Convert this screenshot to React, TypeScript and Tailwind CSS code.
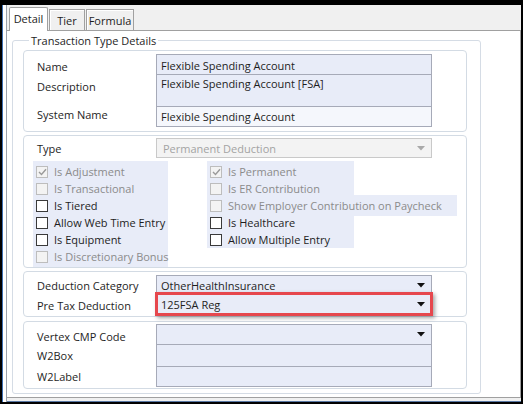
import type { ReactNode } from "react"

const font = "font-['Open_Sans','Noto_Sans',sans-serif]"

function Arrow({ disabled }: { disabled?: boolean }) {
  return (
    <svg width="8" height="5" viewBox="0 0 8 5" className="shrink-0">
      <path d="M0 0h8L4 4.5z" fill={disabled ? "#a9a9a9" : "#111111"} />
    </svg>
  )
}

function Box({ checked, disabled }: { checked?: boolean; disabled?: boolean }) {
  return (
    <span
      className={`flex h-[12px] w-[12px] shrink-0 items-center justify-center border ${
        disabled ? "border-[#bdbdbd] bg-[#f3f3f3]" : "border-[#3a3a3a] bg-white"
      }`}
    >
      {checked && (
        <svg width="9" height="8" viewBox="0 0 9 8">
          <path d="M1 4l2.5 2.5L8 1.2" fill="none" stroke="#9a9a9a" strokeWidth="1.4" />
        </svg>
      )}
    </span>
  )
}

function Check({ label, checked, disabled }: { label: string; checked?: boolean; disabled?: boolean }) {
  return (
    <div className="flex h-[17px] items-center pl-[3px]">
      <Box checked={checked} disabled={disabled} />
      <span className={`ml-[6px] whitespace-nowrap ${disabled ? "text-[#8b8b8b]" : "text-[#1e1e1e]"}`}>{label}</span>
    </div>
  )
}

function Row({ label, labelPad, children }: { label: string; labelPad: string; children: ReactNode }) {
  return (
    <div className="flex items-start">
      <div className={`w-[119px] shrink-0 ${labelPad}`}>{label}</div>
      {children}
    </div>
  )
}

function Section({ children, className = "" }: { children: ReactNode; className?: string }) {
  return <div className={`w-[444px] rounded-[4px] border border-[#d3dbe4] bg-white ${className}`}>{children}</div>
}

const field = "w-[276px] border-x border-t border-[#a6aab8] bg-[#e8ecf8] pl-[4px]"

export default function App() {
  return (
    <div className={`h-[404px] w-[523px] overflow-hidden bg-black px-[2px] pt-[5px] text-[11px] leading-[15px] text-[#1e1e1e] ${font}`}>
      <div className="flex h-[397px] border-l border-[#3d6fb3] bg-white pl-[3px]">
        <div className="flex flex-1 flex-col border-l border-[#9ba1ab] bg-[#f0f0f0]">
          {/* tabs */}
          <div className="flex h-[25px] shrink-0 items-end pl-[2px]">
            <div className="relative z-10 -mb-px flex h-[24px] w-[39px] items-center justify-center rounded-t-[2px] border border-b-0 border-[#a0a0a0] bg-white pb-[2px]">
              Detail
            </div>
            <div className="ml-px flex h-[21px] w-[36px] items-center justify-center border border-b-0 border-[#a0a0a0] bg-[#f0f0f0] shadow-[inset_1px_1px_0_#ffffff]">
              Tier
            </div>
            <div className="ml-px flex h-[21px] w-[48px] items-center justify-center border border-b-0 border-[#a0a0a0] bg-[#f0f0f0] shadow-[inset_1px_1px_0_#ffffff]">
              Formula
            </div>
          </div>

          {/* panel */}
          <div className="flex-1 border border-l-0 border-[#a0a0a0] bg-white pt-[2px] pl-[5px]">
            <fieldset className="w-[469px] rounded-[3px] border border-[#d5dce5] pt-[2px] pr-[13px] pb-[4px] pl-[10px]">
              <legend className="ml-[6px] px-[2px]">Transaction Type Details</legend>
              <div className="flex flex-col gap-[3px]">
                <Section className="pt-[3px] pb-[4px] pl-[13px]">
                  <Row label="Name" labelPad="pt-[5px]">
                    <div className={`${field} h-[20px] pt-[3px]`}>Flexible Spending Account</div>
                  </Row>
                  <Row label="Description" labelPad="pt-[5px]">
                    <div className={`${field} h-[32px] pt-[1px]`}>Flexible Spending Account [FSA]</div>
                  </Row>
                  <Row label="System Name" labelPad="pt-[1px]">
                    <div className={`${field} h-[21px] border-b bg-[#f5f7fc] pt-[2px]`}>Flexible Spending Account</div>
                  </Row>
                </Section>

                <Section className="pt-[2px]">
                  <div className="pl-[13px]">
                    <Row label="Type" labelPad="pt-[3px]">
                      <div className="flex h-[20px] w-[276px] items-center justify-between border border-[#c9c9c9] bg-[#f3f3f3] pr-[6px] pl-[6px] text-[#a3a3a3]">
                        <span>Permanent Deduction</span>
                        <Arrow disabled />
                      </div>
                    </Row>
                  </div>
                  <div className="mt-[3px] flex pl-[9px]">
                    <div className="w-[135px] bg-[#e8ecf8] py-[2px]">
                      <Check label="Is Adjustment" checked disabled />
                      <Check label="Is Transactional" disabled />
                      <Check label="Is Tiered" />
                      <Check label="Allow Web Time Entry" />
                      <Check label="Is Equipment" />
                      <Check label="Is Discretionary Bonus" disabled />
                    </div>
                    <div className="ml-[39px] self-start w-[147px] bg-[#e8ecf8] pt-[2px]">
                      <Check label="Is Permanent" checked disabled />
                      <Check label="Is ER Contribution" disabled />
                      <div className="-my-[2px] w-[250px] bg-[#e8ecf8] py-[2px]">
                        <Check label="Show Employer Contribution on Paycheck" disabled />
                      </div>
                      <Check label="Is Healthcare" />
                      <Check label="Allow Multiple Entry" />
                    </div>
                  </div>
                </Section>

                <Section className="pt-[3px] pb-[2px] pl-[13px]">
                  <Row label="Deduction Category" labelPad="pt-[3px]">
                    <div className={`${field} flex h-[19px] items-center justify-between pr-[6px]`}>
                      <span>OtherHealthInsurance</span>
                      <Arrow />
                    </div>
                  </Row>
                  <Row label="Pre Tax Deduction" labelPad="pt-[4px]">
                    <div className={`${field} relative flex h-[20px] items-center justify-between border-b pr-[6px]`}>
                      <span>125FSA Reg</span>
                      <Arrow />
                      <div className="pointer-events-none absolute -top-[3px] -left-[2px] h-[24px] w-[278px] border-[3px] border-[#e6474d] shadow-[2px_2px_4px_rgba(0,0,0,0.35)]" />
                    </div>
                  </Row>
                </Section>

                <Section className="mt-px pt-[2px] pb-[1px] pl-[13px]">
                  <Row label="Vertex CMP Code" labelPad="pt-[5px]">
                    <div className={`${field} flex h-[20px] items-center justify-end pr-[6px]`}>
                      <Arrow />
                    </div>
                  </Row>
                  <Row label="W2Box" labelPad="pt-[4px]">
                    <div className={`${field} h-[22px]`} />
                  </Row>
                  <Row label="W2Label" labelPad="pt-[3px]">
                    <div className={`${field} h-[21px] border-b`} />
                  </Row>
                </Section>
              </div>
            </fieldset>
          </div>
          <div className="h-[4px] shrink-0 border-b border-[#5877a3] bg-[#f0f0f0]" />
        </div>
      </div>
    </div>
  )
}
